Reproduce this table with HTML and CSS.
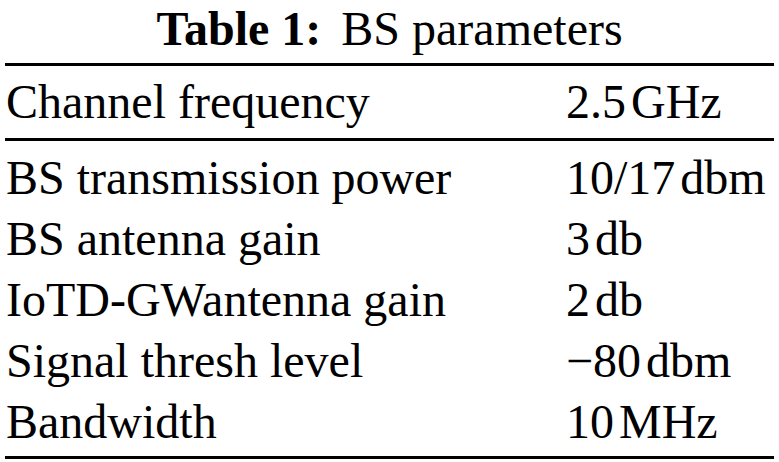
FILE: index.html
```html
<!DOCTYPE html>
<html lang="en">
<head>
    <meta charset="UTF-8">
    <meta name="viewport" content="width=device-width, initial-scale=1.0">
    <title>Table 1: BS parameters</title>
    <link rel="stylesheet" href="styles.css">
</head>
<body>
    <div class="param-table">
        <div class="table-caption">
            <span class="caption-label">Table 1:</span>
            <span class="caption-text">BS parameters</span>
        </div>

        <!-- En-tete -->
        <div class="table-head">
            <div class="table-row">
                <div class="cell-name">Channel frequency</div>
                <div class="cell-value">2.5<span class="unit">GHz</span></div>
            </div>
        </div>

        <!-- Corps -->
        <div class="table-body">
            <div class="table-row">
                <div class="cell-name">BS transmission power</div>
                <div class="cell-value">10/17<span class="unit">dbm</span></div>
            </div>
            <div class="table-row">
                <div class="cell-name">BS antenna gain</div>
                <div class="cell-value">3<span class="unit">db</span></div>
            </div>
            <div class="table-row">
                <div class="cell-name">IoTD-GWantenna gain</div>
                <div class="cell-value">2<span class="unit">db</span></div>
            </div>
            <div class="table-row">
                <div class="cell-name">Signal thresh level</div>
                <div class="cell-value">&minus;80<span class="unit">dbm</span></div>
            </div>
            <div class="table-row">
                <div class="cell-name">Bandwidth</div>
                <div class="cell-value">10<span class="unit">MHz</span></div>
            </div>
        </div>
    </div>
</body>
</html>
```

FILE: styles.css
```css
* {
    margin: 0;
    padding: 0;
    box-sizing: border-box;
}

body {
    font-family: "Liberation Serif", "Times New Roman", serif;
    font-size: 48px;
    color: #000;
    background: #fff;
    width: 779px;
    height: 462px;
    overflow: hidden;
}

.param-table {
    margin: 0 5px;
}

/* Legende */
.table-caption {
    text-align: center;
    line-height: 50px;
    padding-top: 4px;
    padding-bottom: 9px;
}

.caption-label {
    font-weight: bold;
    margin-right: 8px;
}

/* Lignes */
.table-head {
    border-top: 3px solid #000;
    border-bottom: 3px solid #000;
    padding: 5px 0 6px;
}

.table-body {
    border-bottom: 3px solid #000;
    padding: 6px 0 4px;
}

.table-row {
    display: grid;
    grid-template-columns: 560px 1fr;
    line-height: 61px;
    padding-left: 1px;
    white-space: nowrap;
}

/* Espace fin entre valeur et unite */
.unit {
    margin-left: 5px;
}
```
